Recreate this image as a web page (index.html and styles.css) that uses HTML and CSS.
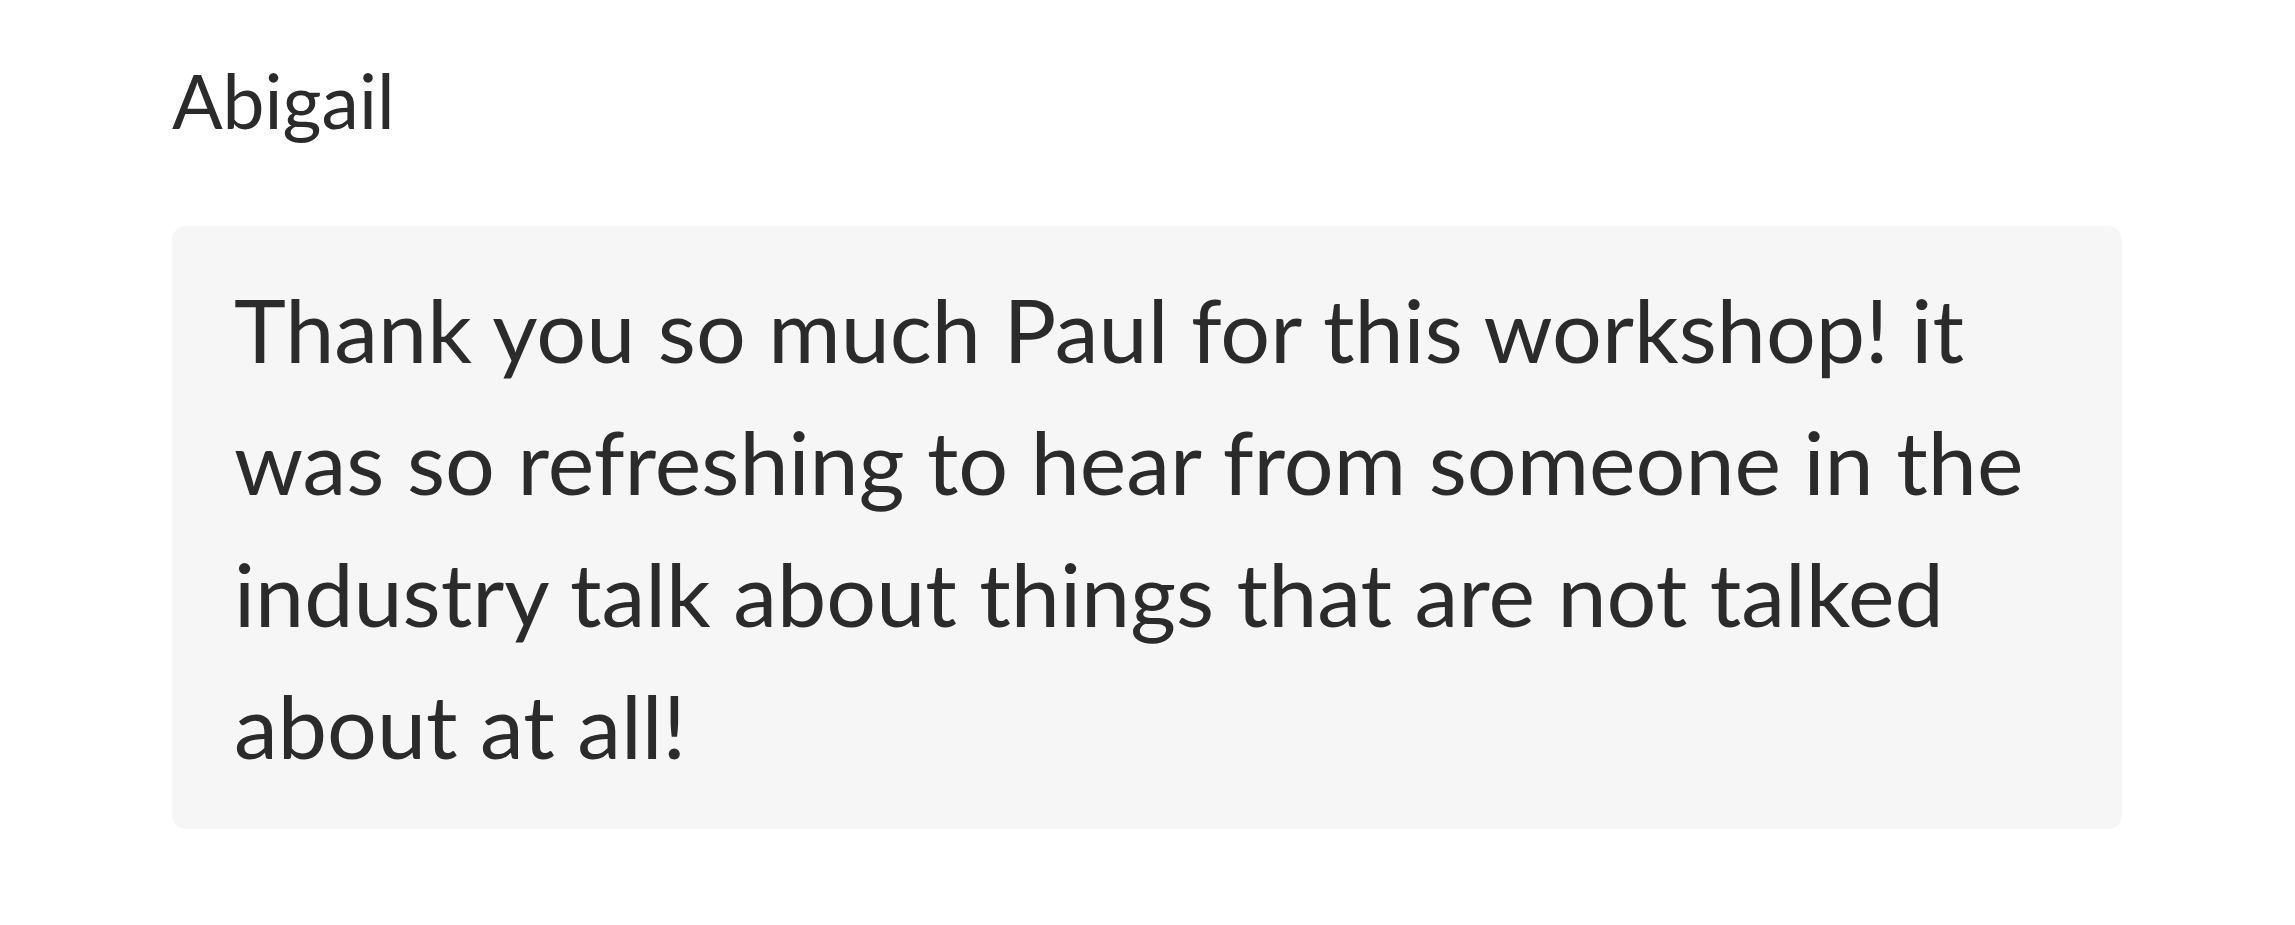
FILE: index.html
```html
<!DOCTYPE html>
<html>
<head>
<meta charset="utf-8">
<link rel="stylesheet" href="styles.css">
</head>
<body>
<div class="comment">
  <div class="name">Abigail</div>
  <div class="bubble">Thank you so much Paul for this workshop! it was so refreshing to hear from someone in the industry talk about things that are not talked about at all!</div>
</div>
</body>
</html>
```

FILE: styles.css
```css
html, body {
  margin: 0;
  padding: 0;
  background: #ffffff;
}
body {
  font-family: Lato, "Open Sans", sans-serif;
  color: #2b2b2b;
}
.comment {
  width: 1950px;
  padding: 45px 0 0 172px;
}
.name {
  font-size: 75px;
  line-height: 110px;
}
.bubble {
  margin-top: 71px;
  background: #f6f6f6;
  border-radius: 14px;
  padding: 37px 60px 38px 62px;
  font-size: 88px;
  line-height: 132px;
}
```
